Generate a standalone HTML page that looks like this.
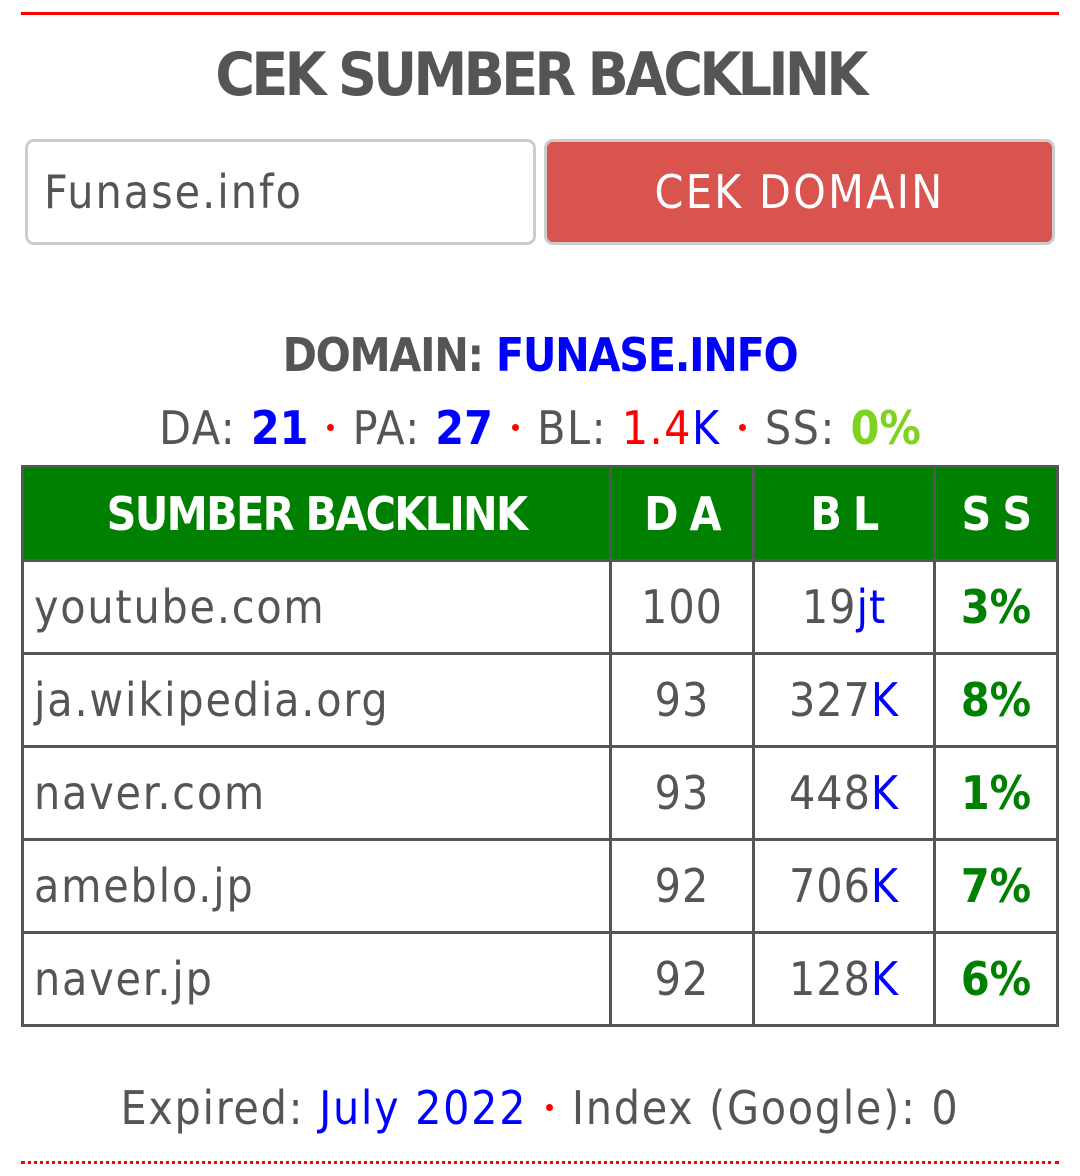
<!DOCTYPE html>
<html><head><meta charset="utf-8"><style>
*{margin:0;padding:0;box-sizing:border-box}
body{width:1080px;height:1176px;background:#fff;font-family:"DejaVu Sans Condensed","DejaVu Sans",sans-serif;font-stretch:condensed;color:#555;position:relative;overflow:hidden}
.abs{position:absolute}
.c{text-align:center;left:0;width:1080px}
.topline{left:21px;top:12px;width:1038px;height:3px;background:#f00}
.title{top:40px;font-size:60px;font-weight:bold;line-height:70px;letter-spacing:-3.6px}
.inp{left:25px;top:139px;width:511px;height:106px;border:3px solid #ccc;border-radius:9px;font-size:46px;line-height:100px;padding-left:16px;color:#555;letter-spacing:2px}
.btn{left:544px;top:139px;width:511px;height:106px;border:3px solid #ccc;border-radius:9px;background:#d9534f;color:#fff;font-size:46px;line-height:100px;text-align:center;letter-spacing:2.3px}
.dom{top:325px;font-size:46px;font-weight:bold;line-height:60px;letter-spacing:-1.3px}
.stats{top:398px;font-size:46px;line-height:60px;letter-spacing:1.5px}
.stats b{letter-spacing:0}
.b{color:#00f}.r{color:#f00}.g{color:#008000}.lg{color:#7ed321}
.d{display:inline-block;width:7px;height:7px;border-radius:50%;background:#f00;vertical-align:middle;margin:0 4px 8px}
table{position:absolute;left:21px;top:465px;width:1038px;border-collapse:collapse}
td,th{border:3px solid #555;font-size:46px;height:93px;padding:0}
th{background:#008000;color:#fff;font-weight:bold;height:94px;letter-spacing:-1.7px}
td{text-align:center;letter-spacing:1px}
td.l{text-align:left;padding-left:10px;letter-spacing:1.8px}
td.g{letter-spacing:0}
.ex{top:1078px;font-size:46px;line-height:60px;letter-spacing:1.7px}
.dot{left:21px;top:1161px;width:1038px;height:0;border-top:3px dotted #f00}
</style></head><body>
<div class="abs topline"></div>
<div class="abs c title">CEK SUMBER BACKLINK</div>
<div class="abs inp">Funase.info</div>
<div class="abs btn">CEK DOMAIN</div>
<div class="abs c dom">DOMAIN: <span class="b">FUNASE.INFO</span></div>
<div class="abs c stats">DA: <b class="b">21</b> <span class="d"></span> PA: <b class="b">27</b> <span class="d"></span> BL: <span class="r">1.4</span><span class="b">K</span> <span class="d"></span> SS: <b class="lg">0%</b></div>
<table>
<tr><th style="width:588px">SUMBER BACKLINK</th><th style="width:143px">D A</th><th style="width:181px">B L</th><th>S S</th></tr>
<tr><td class="l">youtube.com</td><td>100</td><td>19<span class="b">jt</span></td><td class="g"><b>3%</b></td></tr>
<tr><td class="l">ja.wikipedia.org</td><td>93</td><td>327<span class="b">K</span></td><td class="g"><b>8%</b></td></tr>
<tr><td class="l">naver.com</td><td>93</td><td>448<span class="b">K</span></td><td class="g"><b>1%</b></td></tr>
<tr><td class="l">ameblo.jp</td><td>92</td><td>706<span class="b">K</span></td><td class="g"><b>7%</b></td></tr>
<tr><td class="l">naver.jp</td><td>92</td><td>128<span class="b">K</span></td><td class="g"><b>6%</b></td></tr>
</table>
<div class="abs c ex">Expired: <span class="b">July 2022</span> <span class="d"></span> Index (Google): 0</div>
<div class="abs dot"></div>
</body></html>
